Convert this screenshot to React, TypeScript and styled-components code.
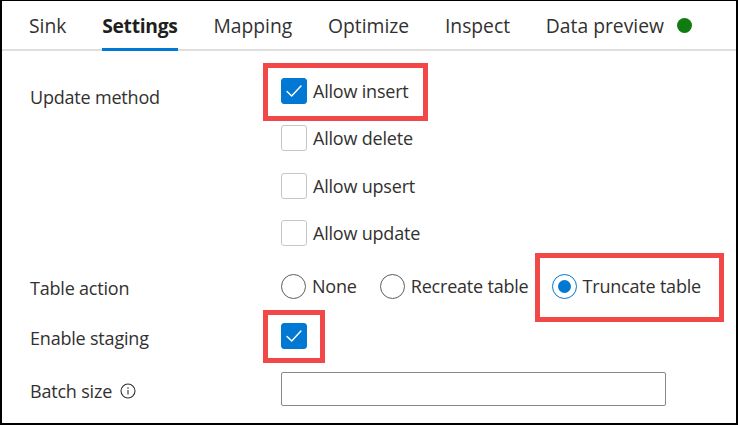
import React from "react";
import styled, { createGlobalStyle } from "styled-components";

const Global = createGlobalStyle`
  html, body { margin: 0; padding: 0; background: #fff; }
  body {
    font-family: "Open Sans", "Noto Sans", sans-serif;
    color: #323130;
    -webkit-font-smoothing: antialiased;
  }
  * { box-sizing: border-box; }
`;

const FONT = "18px";

const Frame = styled.div`
  width: 738px;
  height: 425px;
  border: 2px solid #000;
  border-top-width: 1px;
  background: #fff;
  display: flex;
  flex-direction: column;
`;

const TabBar = styled.div`
  display: flex;
  align-items: stretch;
  gap: 35.8px;
  height: 50px;
  padding: 0 27px;
  border-bottom: 2px solid #e1dfdd;
`;

const Tab = styled.div<{ $active?: boolean }>`
  display: flex;
  align-items: center;
  margin-bottom: -2px;
  padding-top: 2px;
  border-bottom: 3px solid ${(p) => (p.$active ? "#0078d4" : "transparent")};
  font-size: 19.3px;
  font-weight: ${(p) => (p.$active ? 700 : 400)};
  letter-spacing: ${(p) => (p.$active ? "-0.3px" : "0")};
  color: ${(p) => (p.$active ? "#201f1e" : "#323130")};
  white-space: nowrap;
`;

const StatusDot = styled.span`
  width: 15px;
  height: 15px;
  border-radius: 50%;
  background: #107c10;
  margin-left: 13px;
`;

const Form = styled.div`
  display: flex;
  flex-direction: column;
  padding: 27px 0 0 28px;
`;

const Field = styled.div<{ $mt: number; $align?: string }>`
  display: grid;
  grid-template-columns: 251px 1fr;
  align-items: ${(p) => p.$align || "center"};
  margin-top: ${(p) => p.$mt}px;
`;

const Label = styled.div<{ $offset?: number }>`
  display: flex;
  align-items: center;
  gap: 8px;
  font-size: ${FONT};
  letter-spacing: -0.2px;
  line-height: 26px;
  margin-top: ${(p) => p.$offset || 0}px;
  transform: translateY(2px);
`;

const Control = styled.div`
  display: flex;
  align-items: center;
`;

const OptionList = styled.div`
  display: flex;
  flex-direction: column;
  align-items: flex-start;
  gap: 21.4px;
`;

const Option = styled.label`
  display: inline-flex;
  align-items: center;
  gap: 6px;
  height: 26px;
  font-size: ${FONT};
  letter-spacing: -0.2px;
  white-space: nowrap;
`;

const Box = styled.span<{ $checked?: boolean }>`
  width: 26px;
  height: 26px;
  flex: none;
  border-radius: 3px;
  border: 1px solid ${(p) => (p.$checked ? "#0078d4" : "#c8c6c4")};
  background: ${(p) => (p.$checked ? "#0078d4" : "#fff")};
  display: flex;
  align-items: center;
  justify-content: center;
`;

const RadioRow = styled.div`
  display: flex;
  align-items: center;
  gap: 23px;
`;

const Circle = styled.span<{ $checked?: boolean }>`
  width: 25px;
  height: 25px;
  flex: none;
  border-radius: 50%;
  border: 1.5px solid ${(p) => (p.$checked ? "#0078d4" : "#605e5c")};
  display: flex;
  align-items: center;
  justify-content: center;
  &::after {
    content: "";
    width: 13px;
    height: 13px;
    border-radius: 50%;
    background: ${(p) => (p.$checked ? "#0078d4" : "transparent")};
  }
`;

const Highlight = styled.div<{ $p: [number, number, number, number] }>`
  display: flex;
  align-self: flex-start;
  border: 5px solid #f24848;
  padding: ${(p) => p.$p.map((v) => `${v}px`).join(" ")};
  margin: ${(p) => p.$p.map((v) => `${-(v + 5)}px`).join(" ")};
`;

const TextInput = styled.input`
  display: block;
  width: 385px;
  height: 34px;
  margin: 0;
  border: 1px solid #8a8886;
  border-radius: 2px;
  background: #fff;
  font-size: 16px;
  outline: none;
`;

const Check = () => (
  <svg width="26" height="26" viewBox="0 0 26 26">
    <path d="M5.5 13.5 L10.5 18.5 L20.5 7.5" fill="none" stroke="#fff" strokeWidth="1.6" strokeLinecap="round" strokeLinejoin="round" />
  </svg>
);

const InfoIcon = () => (
  <svg width="16" height="16" viewBox="0 0 16 16">
    <circle cx="8" cy="8" r="7" fill="none" stroke="#323130" strokeWidth="1.1" />
    <circle cx="8" cy="5" r="0.8" fill="#323130" />
    <line x1="8" y1="7" x2="8" y2="11.5" stroke="#323130" strokeWidth="1.1" />
  </svg>
);

const Checkbox = ({ checked, label }: { checked?: boolean; label?: string }) => (
  <Option>
    <Box $checked={checked}>{checked && <Check />}</Box>
    {label}
  </Option>
);

const Radio = ({ checked, label }: { checked?: boolean; label: string }) => (
  <Option>
    <Circle $checked={checked} />
    {label}
  </Option>
);

export default function App() {
  return (
    <>
      <Global />
      <Frame>
        <TabBar>
          <Tab>Sink</Tab>
          <Tab $active>Settings</Tab>
          <Tab>Mapping</Tab>
          <Tab>Optimize</Tab>
          <Tab>Inspect</Tab>
          <Tab>
            Data preview
            <StatusDot />
          </Tab>
        </TabBar>
        <Form>
          <Field $mt={0} $align="start">
            <Label $offset={4}>Update method</Label>
            <OptionList>
              <Highlight $p={[10, 14, 12, 13]}>
                <Checkbox checked label="Allow insert" />
              </Highlight>
              <Checkbox label="Allow delete" />
              <Checkbox label="Allow upsert" />
              <Checkbox label="Allow update" />
            </OptionList>
          </Field>
          <Field $mt={27}>
            <Label>Table action</Label>
            <RadioRow>
              <Radio label="None" />
              <Radio label="Recreate table" />
              <Highlight $p={[15, 18, 18, 12]}>
                <Radio checked label="Truncate table" />
              </Highlight>
            </RadioRow>
          </Field>
          <Field $mt={24}>
            <Label>Enable staging</Label>
            <Control>
              <Highlight $p={[8, 13, 9, 13]}>
                <Checkbox checked />
              </Highlight>
            </Control>
          </Field>
          <Field $mt={23}>
            <Label>
              Batch size
              <InfoIcon />
            </Label>
            <Control>
              <TextInput type="text" />
            </Control>
          </Field>
        </Form>
      </Frame>
    </>
  );
}
